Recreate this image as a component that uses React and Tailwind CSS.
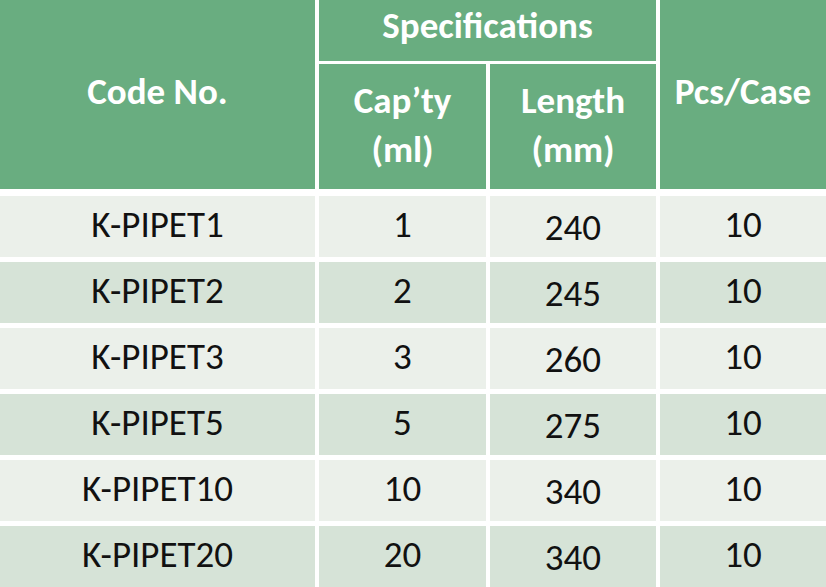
import React from 'react';

const rows = [
    { code: 'K-PIPET1', cap: '1', length: '240', pcs: '10' },
    { code: 'K-PIPET2', cap: '2', length: '245', pcs: '10' },
    { code: 'K-PIPET3', cap: '3', length: '260', pcs: '10' },
    { code: 'K-PIPET5', cap: '5', length: '275', pcs: '10' },
    { code: 'K-PIPET10', cap: '10', length: '340', pcs: '10' },
    { code: 'K-PIPET20', cap: '20', length: '340', pcs: '10' },
];

const font = { fontFamily: 'Carlito, "Open Sans", "Noto Sans", sans-serif' };

export default function App() {
    return (
        <div className="w-[826px] h-[587px] overflow-hidden bg-white" style={font}>
            {/* header */}
            <div className="grid grid-cols-[315px_167px_166px_1fr] grid-rows-[61px_125px] gap-x-[4px] gap-y-[3px] text-white font-bold text-[37px] leading-none">
                <div className="row-span-2 bg-[#69ad80] flex items-center justify-center pb-[6px]">Code No.</div>
                <div className="col-span-2 bg-[#69ad80] flex items-center justify-center pb-[10px]">Specifications</div>
                <div className="row-span-2 bg-[#69ad80] flex items-center justify-center pb-[6px]">Pcs/Case</div>
                <div className="bg-[#69ad80] flex flex-col items-center justify-center leading-[49px] pb-[4px]">
                    <span>Cap’ty</span>
                    <span>(ml)</span>
                </div>
                <div className="bg-[#69ad80] flex flex-col items-center justify-center leading-[49px] pb-[4px]">
                    <span>Length</span>
                    <span>(mm)</span>
                </div>
            </div>

            {/* body */}
            <div className="mt-[7px] grid grid-cols-[315px_167px_166px_1fr] auto-rows-[61px] gap-x-[4px] gap-y-[5px] text-[37px] leading-none text-[#111]">
                {rows.map((r, i) => {
                    const bg = i % 2 === 0 ? 'bg-[#ebf0ea]' : 'bg-[#d6e3d7]';
                    return (
                        <React.Fragment key={r.code}>
                            <div className={`${bg} flex items-center justify-center pb-[4px]`}>{r.code}</div>
                            <div className={`${bg} flex items-center justify-center pb-[4px]`}>{r.cap}</div>
                            <div className={`${bg} flex items-center justify-center pt-[2px]`}>{r.length}</div>
                            <div className={`${bg} flex items-center justify-center pb-[4px]`}>{r.pcs}</div>
                        </React.Fragment>
                    );
                })}
            </div>
        </div>
    );
}
